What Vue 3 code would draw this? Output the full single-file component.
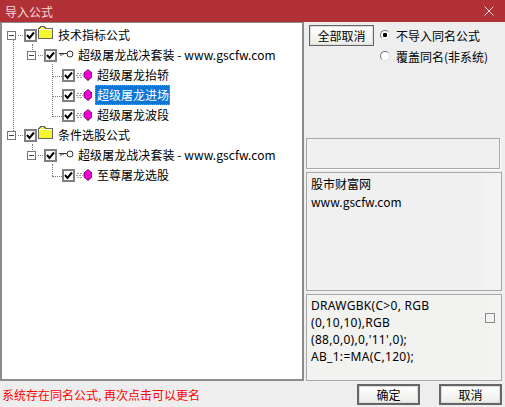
<template>
  <div class="dialog">
    <header class="titlebar">
      <span class="title">导入公式</span>
      <svg class="close" width="10" height="10" viewBox="0 0 10 10">
        <path d="M0.5 0.5L9.5 9.5M9.5 0.5L0.5 9.5" stroke="#f3dcdc" stroke-width="1" fill="none" />
      </svg>
    </header>

    <main class="body">
      <section class="tree">
        <div
          v-for="row in rows"
          :key="row.id"
          class="row"
          :class="'level-' + row.level"
        >
          <i
            v-for="(l, i) in row.lines"
            :key="i"
            class="line"
            :class="l.dir"
            :style="{ left: l.x + 'px', top: l.y + 'px', [l.dir === 'v' ? 'height' : 'width']: l.len + 'px' }"
          ></i>
          <span v-if="row.level < 2" class="expander"></span>
          <span class="check">
            <svg width="9" height="9" viewBox="0 0 9 9">
              <path d="M1 4L3.5 7L8 1.5" stroke="#000" stroke-width="2" fill="none" />
            </svg>
          </span>
          <svg v-if="row.type === 'folder'" class="icon folder" width="15" height="13" viewBox="0 0 15 13" shape-rendering="crispEdges">
            <path d="M0.5 12.5V2.5H1.5V1.5H2.5V0.5H6.5V1.5H7.5V2.5H14.5V12.5Z" fill="#f6f62e" stroke="#666" stroke-width="1" />
            <path d="M1 3.5H14" stroke="#fffff0" stroke-width="1" />
          </svg>
          <svg v-else-if="row.type === 'key'" class="icon key" width="15" height="8" viewBox="0 0 15 8">
            <circle cx="11" cy="4" r="3" fill="#fff" stroke="#333" stroke-width="1" />
            <path d="M0 3.5H8M2 3.5V6M4 3.5V5" stroke="#333" stroke-width="1" fill="none" />
          </svg>
          <svg v-else class="icon gem" width="16" height="12" viewBox="0 0 16 12">
            <path d="M1 4.5H7M0 6.5H7M1 8.5H7" stroke="#999" stroke-width="1" stroke-dasharray="2 1" fill="none" />
            <path d="M12 0.5L16 4V8L12 11.5L8 8V4Z" fill="#ff00e0" stroke="#500050" stroke-width="0.8" />
            <path d="M8 4L12 6.5L16 4M12 6.5V11.5" stroke="#800080" stroke-width="0.6" fill="none" />
          </svg>
          <span class="label" :class="{ selected: row.selected }">{{ row.text }}</span>
        </div>
      </section>

      <aside class="side">
        <div class="options">
          <button class="btn all">全部取消</button>
          <div class="radios">
            <label class="radio"><span class="dot on"></span>不导入同名公式</label>
            <label class="radio"><span class="dot"></span>覆盖同名(非系统)</label>
          </div>
        </div>
        <div class="box empty"></div>
        <div class="box info">
          <div class="inner">
            <div>股市财富网</div>
            <div>www.gscfw.com</div>
          </div>
        </div>
        <div class="box code">
          <div class="inner">
            <div v-for="line in codeLines" :key="line">{{ line }}</div>
          </div>
          <span class="small-check"></span>
        </div>
      </aside>
    </main>

    <footer class="footer">
      <span class="warn">系统存在同名公式, 再次点击可以更名</span>
      <button class="btn ok">确定</button>
      <button class="btn cancel">取消</button>
    </footer>
  </div>
</template>

<script setup>
const title = '超级屠龙战决套装 - www.gscfw.com'

const rows = [
  { id: 1, level: 0, type: 'folder', text: '技术指标公式', lines: [
    { dir: 'h', x: 16, y: 10, len: 7 },
    { dir: 'v', x: 11, y: 15, len: 93 },
    { dir: 'v', x: 30, y: 19, len: 8 }
  ] },
  { id: 2, level: 1, type: 'key', text: title, lines: [
    { dir: 'h', x: 36, y: 10, len: 7 },
    { dir: 'v', x: 50, y: 19, len: 53 }
  ] },
  { id: 3, level: 2, type: 'gem', text: '超级屠龙抬轿', lines: [{ dir: 'h', x: 50, y: 11, len: 12 }] },
  { id: 4, level: 2, type: 'gem', text: '超级屠龙进场', selected: true, lines: [{ dir: 'h', x: 50, y: 11, len: 12 }] },
  { id: 5, level: 2, type: 'gem', text: '超级屠龙波段', lines: [{ dir: 'h', x: 50, y: 11, len: 12 }] },
  { id: 6, level: 0, type: 'folder', text: '条件选股公式', lines: [
    { dir: 'h', x: 16, y: 10, len: 7 },
    { dir: 'v', x: 30, y: 19, len: 8 }
  ] },
  { id: 7, level: 1, type: 'key', text: title, lines: [
    { dir: 'h', x: 36, y: 10, len: 7 },
    { dir: 'v', x: 50, y: 19, len: 12 }
  ] },
  { id: 8, level: 2, type: 'gem', text: '至尊屠龙选股', lines: [{ dir: 'h', x: 50, y: 11, len: 12 }] }
]

const codeLines = [
  'DRAWGBK(C>0, RGB',
  '(0,10,10),RGB',
  "(88,0,0),0,'11',0);",
  'AB_1:=MA(C,120);'
]
</script>

<style>
html,
body {
  margin: 0;
  background: #eeeeee;
}
</style>

<style scoped>
.dialog {
  width: 505px;
  height: 407px;
  display: flex;
  flex-direction: column;
  background: #eeeeee;
  font-family: "Noto Sans CJK SC", "Noto Sans", sans-serif;
  font-size: 12px;
  color: #000;
  overflow: hidden;
}

.titlebar {
  height: 22px;
  flex: none;
  display: flex;
  align-items: center;
  justify-content: space-between;
  padding: 0 11px 0 5px;
  background: #b23137;
  color: #f3dcdc;
}

.body {
  height: 359px;
  flex: none;
  display: flex;
}

.tree {
  width: 304px;
  flex: none;
  box-sizing: border-box;
  padding-top: 2px;
  background: #fff;
  border: 2px solid #8c8c8c;
  border-width: 1px 2px 2px 2px;
}

.row {
  position: relative;
  height: 20px;
  display: flex;
  align-items: center;
}

.level-0 { padding-left: 5px; }
.level-1 { padding-left: 25px; }
.level-2 { padding-left: 60px; }

.line {
  position: absolute;
  display: block;
}

.line.h { border-top: 1px dotted #777; height: 0; }
.line.v { border-left: 1px dotted #777; width: 0; }

.expander {
  width: 9px;
  height: 9px;
  box-sizing: border-box;
  border: 1px solid #777;
  background: linear-gradient(#444, #444) center / 5px 1px no-repeat #fff;
  margin-right: 8px;
  position: relative;
  z-index: 1;
}

.check {
  width: 13px;
  height: 13px;
  box-sizing: border-box;
  border: 2px solid #808080;
  background: #fff;
  display: flex;
  align-items: center;
  justify-content: center;
  flex: none;
  position: relative;
  z-index: 1;
}

.icon { flex: none; }
.folder { margin: -5px 0 0 1px; }
.key { margin: -2px 0 0 2px; }
.gem { margin-left: 1px; }

.label {
  margin-left: 5px;
  white-space: nowrap;
  line-height: 20px;
}

.key + .label {
  margin-left: 4px;
  letter-spacing: 0.07px;
}

.selected {
  margin-left: 3px;
  padding: 0 0 0 2px;
  width: 75px;
  box-sizing: border-box;
  background: #0b76d6;
  color: #fff;
  outline: 1px dotted #e08a20;
  outline-offset: -1px;
}

.side {
  width: 199px;
  flex: none;
  box-sizing: border-box;
  padding: 0 3px 0 2px;
  display: flex;
  flex-direction: column;
}

.options {
  height: 116px;
  flex: none;
  box-sizing: border-box;
  padding: 3px 0 0 3px;
  display: flex;
  align-items: flex-start;
  gap: 6px;
}

.btn {
  box-sizing: border-box;
  height: 21px;
  padding: 0;
  font: inherit;
  color: #000;
  border: 1px solid #666;
  box-shadow: inset 0 0 0 1px #ddd;
  background: linear-gradient(#fff, #f4f4f2 60%, #ecebe8);
}

.all { width: 65px; flex: none; }

.radios {
  display: flex;
  flex-direction: column;
  gap: 3px;
}

.radio {
  height: 18px;
  display: flex;
  align-items: center;
  white-space: nowrap;
  margin-top: 1px;
}

.radio + .radio { margin-top: 0; }

.dot {
  width: 10px;
  height: 10px;
  flex: none;
  box-sizing: border-box;
  border: 1px solid #777;
  border-right-color: #ddd;
  border-bottom-color: #ddd;
  border-radius: 50%;
  background: #fff;
  margin-right: 6px;
}

.dot.on {
  background: radial-gradient(circle, #000 2px, #fff 2.5px);
}

.box {
  box-sizing: border-box;
  border: 1px solid #a8a8a8;
  background: #f0f0f0;
  position: relative;
  flex: none;
}

.empty {
  width: 194px;
  height: 31px;
  box-shadow: 1px 1px 0 #fff;
  margin-bottom: 3px;
}

.info {
  width: 196px;
  height: 119px;
  margin-bottom: 3px;
  background: #f4f3f1;
}

.code {
  width: 196px;
  height: 87px;
  background: #f4f3f1;
}

.inner {
  width: 177px;
  height: 100%;
  box-sizing: border-box;
  padding: 2px 0 0 4px;
  background: #f0f0f0;
  font-family: "Noto Sans", "Noto Sans CJK SC", sans-serif;
  line-height: 17px;
}

.code .inner {
  letter-spacing: 0.3px;
  background: #f2f2f0;
}

.info .inner {
  font-family: "Noto Sans CJK SC", "Noto Sans", sans-serif;
  line-height: 18px;
}

.small-check {
  position: absolute;
  left: 178px;
  top: 18px;
  width: 10px;
  height: 10px;
  box-sizing: border-box;
  border: 1px solid #8a8a8a;
  background: #f4f3f1;
}

.footer {
  flex: 1;
  display: flex;
  align-items: center;
  padding: 0 3px 0 2px;
}

.warn {
  color: #ff0000;
  flex: 1;
  white-space: nowrap;
}

.ok,
.cancel {
  width: 63px;
  height: 21px;
  border-width: 2px;
}

.ok { margin-right: 19px; }
</style>
